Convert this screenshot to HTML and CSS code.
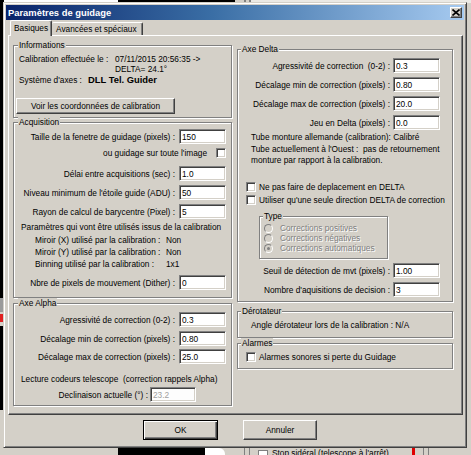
FILE: index.html
```html
<!DOCTYPE html>
<html lang="fr">
<head>
<meta charset="utf-8">
<title>Paramètres de guidage</title>
<link rel="stylesheet" href="styles.css">
</head>
<body>
<div class="desktop">
  <div class="under-bar">
    <span class="ub-grey"></span>
    <span class="ub-black"></span>
    <span class="ub-white"></span>
    <span class="ub-gap"></span>
    <span class="ub-sep"></span>
    <span class="ub-check"></span>
    <span class="ub-text">Stop sidéral (telescope à l'arrêt)</span>
    <span class="ub-red"></span>
    <span class="ub-sep"></span>
  </div>

  <div class="window">
    <div class="titlebar">
      <span class="title">Paramètres de guidage</span>
      <button class="close" type="button" aria-label="Fermer">
        <svg width="8" height="7" viewBox="0 0 8 7"><path d="M0.5 0.5 L7.5 6.5 M7.5 0.5 L0.5 6.5" stroke="#000" stroke-width="1.6" fill="none"/></svg>
      </button>
    </div>

    <div class="tabs">
      <div class="tab active">Basiques</div>
      <div class="tab">Avancées et spéciaux</div>
    </div>

    <div class="panel">
      <div class="col">
        <div class="group g-info">
          <div class="legend">Informations</div>
          <div class="info-row first">
            <span class="info-label">Calibration effectuée le :</span>
            <span class="info-value">07/11/2015 20:56:35 -&gt;<br>DELTA= 24.1°</span>
          </div>
          <div class="info-row">
            <span class="info-label short">Système d'axes :</span>
            <span class="info-bold">DLL Tel. Guider</span>
          </div>
          <button class="btn btn-calib" type="button">Voir les coordonnées de calibration</button>
        </div>

        <div class="group g-acq">
          <div class="legend">Acquisition</div>
          <div class="row m1"><span>Taille de la fenetre de guidage (pixels) :</span><input class="field" type="text" value="150"></div>
          <div class="row m1"><span>ou guidage sur toute l'image</span><span class="check wide-gap"></span></div>
          <div class="row m6"><span>Délai entre acquisitions (sec) :</span><input class="field" type="text" value="1.0"></div>
          <div class="row m4"><span>Niveau minimum de l'étoile guide (ADU) :</span><input class="field" type="text" value="50"></div>
          <div class="row m4"><span>Rayon de calcul de barycentre (Pixel) :</span><input class="field" type="text" value="5"></div>
          <div class="note m2">Paramètres qui vont être utilisés issus de la calibration</div>
          <div class="kv m1"><span class="k">Miroir (X) utilisé par la calibration :</span><span>Non</span></div>
          <div class="kv"><span class="k">Miroir (Y) utilisé par la calibration :</span><span>Non</span></div>
          <div class="kv"><span class="k">Binning utilisé par la calibration :</span><span>1x1</span></div>
          <div class="row m5"><span>Nbre de pixels de mouvement (Dither) :</span><input class="field" type="text" value="0"></div>
        </div>

        <div class="group g-alpha">
          <div class="legend">Axe Alpha</div>
          <div class="row m3"><span>Agressivité de correction (0-2) :</span><input class="field" type="text" value="0.3"></div>
          <div class="row m4"><span>Décalage min de correction (pixels) :</span><input class="field" type="text" value="0.80"></div>
          <div class="row m3"><span>Décalage max de correction (pixels) :</span><input class="field" type="text" value="25.0"></div>
          <div class="note m9">Lecture codeurs telescope&nbsp; (correction rappels Alpha)</div>
          <div class="row m2 decl"><span>Declinaison actuelle (°) :</span><input class="field disabled" type="text" value="23.2" disabled></div>
        </div>
      </div>

      <div class="col">
        <div class="group g-delta">
          <div class="legend">Axe Delta</div>
          <div class="row m3"><span>Agressivité de correction&nbsp; (0-2) :</span><input class="field" type="text" value="0.3"></div>
          <div class="row m4"><span>Décalage min de correction (pixels) :</span><input class="field" type="text" value="0.80"></div>
          <div class="row m4"><span>Décalage max de correction (pixels) :</span><input class="field" type="text" value="20.0"></div>
          <div class="row m4"><span>Jeu en Delta (pixels) :</span><input class="field" type="text" value="0.0"></div>
          <div class="text m2">Tube monture allemande (calibration): Calibré</div>
          <div class="text m1">Tube actuellement à l'Ouest :&nbsp; pas de retournement<br>monture par rapport à la calibration.</div>
          <label class="opt m15"><span class="check"></span><span>Ne pas faire de deplacement en DELTA</span></label>
          <label class="opt m1"><span class="check"></span><span>Utiliser qu'une seule direction DELTA de correction</span></label>
          <div class="group g-type">
            <div class="legend">Type</div>
            <div class="radio-row m1"><span class="radio"></span><span class="dis">Corrections positives</span></div>
            <div class="radio-row"><span class="radio"></span><span class="dis">Corrections négatives</span></div>
            <div class="radio-row"><span class="radio on"></span><span class="dis">Corrections automatiques</span></div>
          </div>
          <div class="row m4"><span>Seuil de détection de mvt (pixels) :</span><input class="field" type="text" value="1.00"></div>
          <div class="row m4"><span>Nombre d'aquisitions de decision :</span><input class="field" type="text" value="3"></div>
        </div>

        <div class="group g-derot">
          <div class="legend">Dérotateur</div>
          <div class="text m3">Angle dérotateur lors de la calibration : N/A</div>
        </div>

        <div class="group g-alarm">
          <div class="legend">Alarmes</div>
          <label class="opt m2"><span class="check"></span><span>Alarmes sonores si perte du Guidage</span></label>
        </div>
      </div>
    </div>

    <div class="actions">
      <button class="btn btn-ok" type="button">OK</button>
      <button class="btn btn-cancel" type="button">Annuler</button>
    </div>
  </div>
</div>
</body>
</html>
```

FILE: styles.css
```css
* { box-sizing: border-box; }

html, body {
  margin: 0;
  padding: 0;
}

body {
  width: 471px;
  height: 455px;
  overflow: hidden;
  font-family: "Liberation Sans", Arial, sans-serif;
  font-size: 8.3px;
  color: #000;
}

/* desktop behind the dialog */
.desktop {
  position: relative;
  width: 471px;
  height: 455px;
  overflow: hidden;
  display: flex;
  flex-direction: column;
  justify-content: flex-end;
  background:
    linear-gradient(#000, #000) 0 0 / 4px 298px no-repeat,
    linear-gradient(#9a9a9a, #9a9a9a) 0 298px / 4px 14px no-repeat,
    linear-gradient(#e02020, #e02020) 0 314px / 3px 8px no-repeat,
    linear-gradient(#000, #000) 0 326px / 4px 84px no-repeat,
    linear-gradient(to right, #fff 0 118px, #000 118px 235px, #d4d0c8 235px 244px, #808080 244px 246px, #d4d0c8 246px 249px, #808080 249px 251px, #ebe9e4 251px) 0 0 / 100% 3px no-repeat,
    #d4d0c8;
}

.under-bar {
  height: 7px;
  display: flex;
  align-items: flex-start;
  overflow: hidden;
  background: #d4d0c8;
}
.ub-grey { width: 118px; height: 7px; background: #d4d0c8; }
.ub-black { width: 87px; height: 7px; background: #000; }
.ub-white { width: 20px; height: 7px; background: #fff; border-radius: 0 6px 0 0; }
.ub-gap { width: 19px; }
.ub-sep { width: 6px; height: 7px; border-left: 1px solid #808080; border-right: 1px solid #808080; margin-right: 8px; }
.ub-check { width: 10px; height: 10px; margin-top: 2px; background: #fff; border: 1px solid #808080; margin-right: 4px; }
.ub-text { line-height: 11px; white-space: nowrap; margin-top: 0; }
.ub-red { width: 3px; height: 7px; background: #e00000; margin-left: 23px; margin-right: 8px; }

/* dialog window */
.window {
  position: absolute;
  left: 3px;
  top: 2px;
  width: 464px;
  height: 446px;
  background: #d4d0c8;
  border: 1px solid;
  border-color: #d4d0c8 #404040 #404040 #d4d0c8;
  box-shadow: inset 1px 1px 0 #fff, inset -1px -1px 0 #808080;
  padding: 2px;
  display: flex;
  flex-direction: column;
}

.titlebar {
  height: 15px;
  flex: none;
  display: flex;
  align-items: center;
  justify-content: space-between;
  padding-left: 2px;
  padding-right: 2px;
  background: linear-gradient(to right, #0a246a, #3a6ea5 45%, #a6caf0);
}
.title {
  color: #fff;
  font-weight: bold;
  font-size: 9.4px;
  white-space: nowrap;
}
.close {
  width: 12px;
  height: 11px;
  padding: 0;
  margin: 0;
  background: #d4d0c8;
  border: 1px solid;
  border-color: #fff #404040 #404040 #fff;
  box-shadow: inset -1px -1px 0 #808080;
  display: flex;
  align-items: center;
  justify-content: center;
}
.close svg { display: block; }

/* tab strip */
.tabs {
  height: 15px;
  flex: none;
  display: flex;
  align-items: flex-end;
  margin-left: 2px;
  padding-left: 2px;
}
.tab {
  height: 13px;
  padding: 0 4px;
  line-height: 12px;
  background: #d4d0c8;
  border-left: 1px solid #fff;
  border-top: 1px solid #fff;
  border-right: 1px solid #404040;
  border-radius: 2px 2px 0 0;
  box-shadow: inset -1px 0 0 #808080;
  white-space: nowrap;
}
.tab.active {
  position: relative;
  z-index: 1;
  height: 16px;
  margin-bottom: -1px;
  width: 42px;
  padding: 0 3px;
  line-height: 14px;
}
.tab:not(.active) {
  width: 91px;
  border-left: 0;
}

.panel {
  height: 380px;
  flex: none;
  width: 455px;
  margin-left: 2px;
  border-left: 1px solid #fff;
  border-top: 1px solid #fff;
  border-right: 1px solid #404040;
  border-bottom: 1px solid #404040;
  box-shadow: inset -1px -1px 0 #808080;
  padding: 0 0 0 4px;
  display: grid;
  grid-template-columns: 219px 216px;
  column-gap: 5px;
  align-items: start;
}

.col { display: flex; flex-direction: column; }

/* etched group boxes */
.group {
  border: 1px solid #808080;
  box-shadow: inset 1px 1px 0 #fff, 1px 1px 0 #fff;
  display: flex;
  flex-direction: column;
  flex: none;
}
.legend {
  align-self: flex-start;
  line-height: 11px;
  height: 11px;
  margin-top: -6px;
  margin-left: 4px;
  padding: 0 1px;
  background: #d4d0c8;
  white-space: nowrap;
}

.g-info { margin-top: 9px; height: 73px; }
.g-acq { margin-top: 4px; height: 176px; padding-right: 5px; }
.g-alpha { margin-top: 5px; height: 103px; padding-right: 5px; }
.g-delta { margin-top: 13px; height: 253px; padding-right: 12px; }
.g-derot { margin-top: 9px; height: 27px; }
.g-alarm { margin-top: 5px; height: 26px; }
.g-delta .legend, .g-derot .legend, .g-alarm .legend { margin-left: 3px; }

/* Informations */
.info-row { display: flex; margin-left: 5px; line-height: 10px; }
.info-row.first { margin-top: 3px; }
.info-label { width: 96px; flex: none; white-space: nowrap; }
.info-label.short { width: 69px; margin-top: 1px; }
.info-value { white-space: nowrap; }
.info-bold { font-weight: bold; font-size: 9.4px; line-height: 12px; white-space: nowrap; }

/* buttons */
.btn {
  font-family: inherit;
  font-size: 8.3px;
  color: #000;
  background: #d4d0c8;
  border: 1px solid;
  border-color: #fff #404040 #404040 #fff;
  box-shadow: inset -1px -1px 0 #808080;
  padding: 0;
  margin: 0;
  white-space: nowrap;
}
.btn-calib {
  align-self: flex-start;
  width: 159px;
  height: 16px;
  margin-top: 12px;
  margin-left: 2px;
}
.actions {
  display: flex;
  gap: 25px;
  margin-top: 5px;
  padding-left: 137px;
}
.btn-ok {
  width: 75px;
  height: 20px;
  border: 1px solid #000;
  box-shadow: inset 1px 1px 0 #fff, inset -1px -1px 0 #404040, inset -2px -2px 0 #808080;
}
.btn-cancel { width: 74px; height: 20px; }

/* label + field rows */
.row {
  display: flex;
  justify-content: flex-end;
  align-items: center;
  height: 15px;
  gap: 4px;
  white-space: nowrap;
}
.g-delta > .row { gap: 3px; }
.row.decl { padding-right: 30px; gap: 2px; }

.field {
  width: 47px;
  height: 15px;
  flex: none;
  margin: 0;
  padding: 0 2px;
  font-family: inherit;
  font-size: 8.3px;
  color: #000;
  background: #fff;
  border: 1px solid;
  border-color: #808080 #fff #fff #808080;
  box-shadow: inset 1px 1px 0 #404040, inset -1px -1px 0 #d4d0c8;
  outline: none;
}
.field.disabled {
  width: 46px;
  color: #a0a0a0;
  background: #fdfdfd;
}

.check {
  width: 10px;
  height: 10px;
  flex: none;
  background: #fff;
  border: 1px solid;
  border-color: #808080 #fff #fff #808080;
  box-shadow: inset 1px 1px 0 #404040, inset -1px -1px 0 #d4d0c8;
}
.wide-gap { margin-left: 5px; }

.note { margin-left: 7px; line-height: 12px; height: 12px; white-space: nowrap; }
.kv { display: flex; margin-left: 21px; line-height: 12px; height: 12px; white-space: nowrap; }
.kv .k { width: 131px; flex: none; }

.text { margin-left: 13px; line-height: 11px; white-space: nowrap; }

.opt {
  display: flex;
  align-items: center;
  gap: 3px;
  height: 12px;
  margin-left: 8px;
  white-space: nowrap;
}

.g-type {
  margin-top: 10px;
  margin-left: 21px;
  width: 129px;
  height: 43px;
}
.g-type .legend { margin-left: 3px; }
.radio-row {
  display: flex;
  align-items: center;
  height: 10px;
  margin-left: 4px;
  gap: 7px;
  white-space: nowrap;
}
.radio {
  width: 9px;
  height: 9px;
  flex: none;
  border-radius: 50%;
  border: 1px solid;
  border-color: #808080 #fff #fff #808080;
  background: #d4d0c8;
  display: flex;
  align-items: center;
  justify-content: center;
}
.radio.on::after {
  content: "";
  width: 3px;
  height: 3px;
  border-radius: 50%;
  background: #808080;
}
.dis { color: #808080; text-shadow: 1px 1px 0 #fff; }

.m1 { margin-top: 1px; }
.m2 { margin-top: 2px; }
.m3 { margin-top: 3px; }
.m4 { margin-top: 4px; }
.m5 { margin-top: 5px; }
.m6 { margin-top: 6px; }
.m9 { margin-top: 9px; }
.m15 { margin-top: 15px; }
```
